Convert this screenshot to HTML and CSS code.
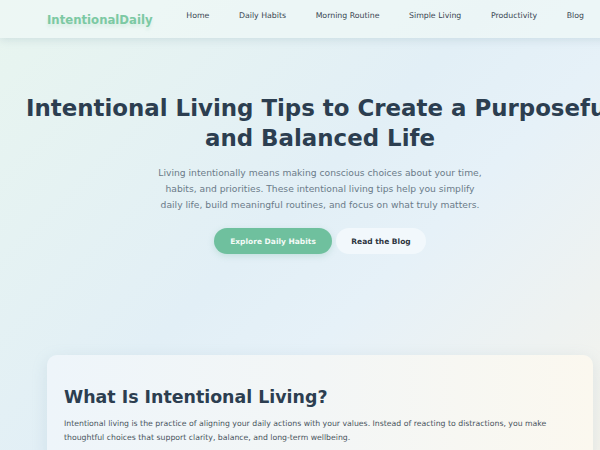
FILE: index.html
```html
<!DOCTYPE html>
<html lang="en">
<head>
<meta charset="utf-8">
<title>IntentionalDaily</title>
<link rel="stylesheet" href="styles.css">
</head>
<body>
<div class="site">
  <header class="nav">
    <div class="nav-inner">
      <a class="logo" href="#">IntentionalDaily</a>
      <nav class="links">
        <a href="#">Home</a>
        <a href="#">Daily Habits</a>
        <a href="#">Morning Routine</a>
        <a href="#">Simple Living</a>
        <a href="#">Productivity</a>
        <a href="#">Blog</a>
      </nav>
    </div>
  </header>
  <main class="container">
    <section class="hero">
      <h1>Intentional Living Tips to Create a Purposeful and Balanced Life</h1>
      <p class="lead">Living intentionally means making conscious choices about your time, habits, and priorities. These intentional living tips help you simplify daily life, build meaningful routines, and focus on what truly matters.</p>
      <div class="actions">
        <a class="btn btn-primary" href="#">Explore Daily Habits</a>
        <a class="btn btn-ghost" href="#">Read the Blog</a>
      </div>
    </section>
    <section class="card">
      <h2>What Is Intentional Living?</h2>
      <p>Intentional living is the practice of aligning your daily actions with your values. Instead of reacting to distractions, you make thoughtful choices that support clarity, balance, and long-term wellbeing.</p>
    </section>
  </main>
</div>
</body>
</html>
```

FILE: styles.css
```css
html {
  overflow: hidden;
}
body {
  margin: 0;
  font-family: "DejaVu Sans", Verdana, sans-serif;
  color: #2c3e50;
}
.site {
  width: 640px;
  min-height: 450px;
  background: linear-gradient(135deg, #e8f5ef 0%, #e2eff6 45%, #e6f1f8 60%, #f6f3ea 100%);
}
a {
  text-decoration: none;
  color: inherit;
}
.nav {
  height: 38px;
  background: rgba(240, 248, 246, 0.7);
  box-shadow: 0 2px 8px rgba(120, 150, 170, 0.22);
}
.nav-inner {
  display: flex;
  align-items: center;
  justify-content: space-between;
  height: 100%;
  padding: 0 47px;
}
.logo {
  font-weight: bold;
  font-size: 11.7px;
  color: #7cc9a3;
  margin-top: 1px;
  text-shadow: 0 3px 3px rgba(150, 210, 180, 0.25);
}
.links {
  display: flex;
  gap: 29.6px;
  margin-right: 9px;
  margin-top: -8px;
}
.links a {
  font-size: 7.8px;
  color: #3a4652;
}
.container {
  padding: 0 47px;
}
.hero {
  margin: 0 -30px;
  padding-top: 55px;
  text-align: center;
}
h1 {
  margin: 0;
  font-size: 22.9px;
  line-height: 30px;
  font-weight: bold;
  color: #2c3e50;
}
.lead {
  width: 330px;
  margin: 12px auto 0;
  font-size: 9.2px;
  line-height: 16px;
  color: #6b7b89;
}
.actions {
  display: flex;
  justify-content: center;
  gap: 4px;
  margin-top: 15px;
}
.btn {
  display: inline-flex;
  align-items: center;
  justify-content: center;
  height: 26px;
  border-radius: 13px;
  font-size: 7.5px;
  font-weight: bold;
}
.btn-primary {
  width: 118px;
  background: #6fc09e;
  color: #f4fbf7;
  box-shadow: 0 2px 6px rgba(100, 180, 150, 0.25);
}
.btn-ghost {
  width: 90px;
  background: rgba(245, 250, 253, 0.8);
  color: #2c3440;
}
.card {
  margin-top: 101px;
  padding: 30px 17px 20px;
  border-radius: 10px;
  background: linear-gradient(90deg, #eef5fa 0%, #f3f6f6 50%, #fbf8ef 100%);
  box-shadow: 0 4px 16px rgba(130, 160, 180, 0.18);
}
.card h2 {
  margin: 0;
  font-size: 17.4px;
  line-height: 24px;
  color: #2c3e50;
}
.card p {
  margin: 8px 0 0;
  font-size: 7.75px;
  line-height: 13.5px;
  color: #4a5560;
}
```
